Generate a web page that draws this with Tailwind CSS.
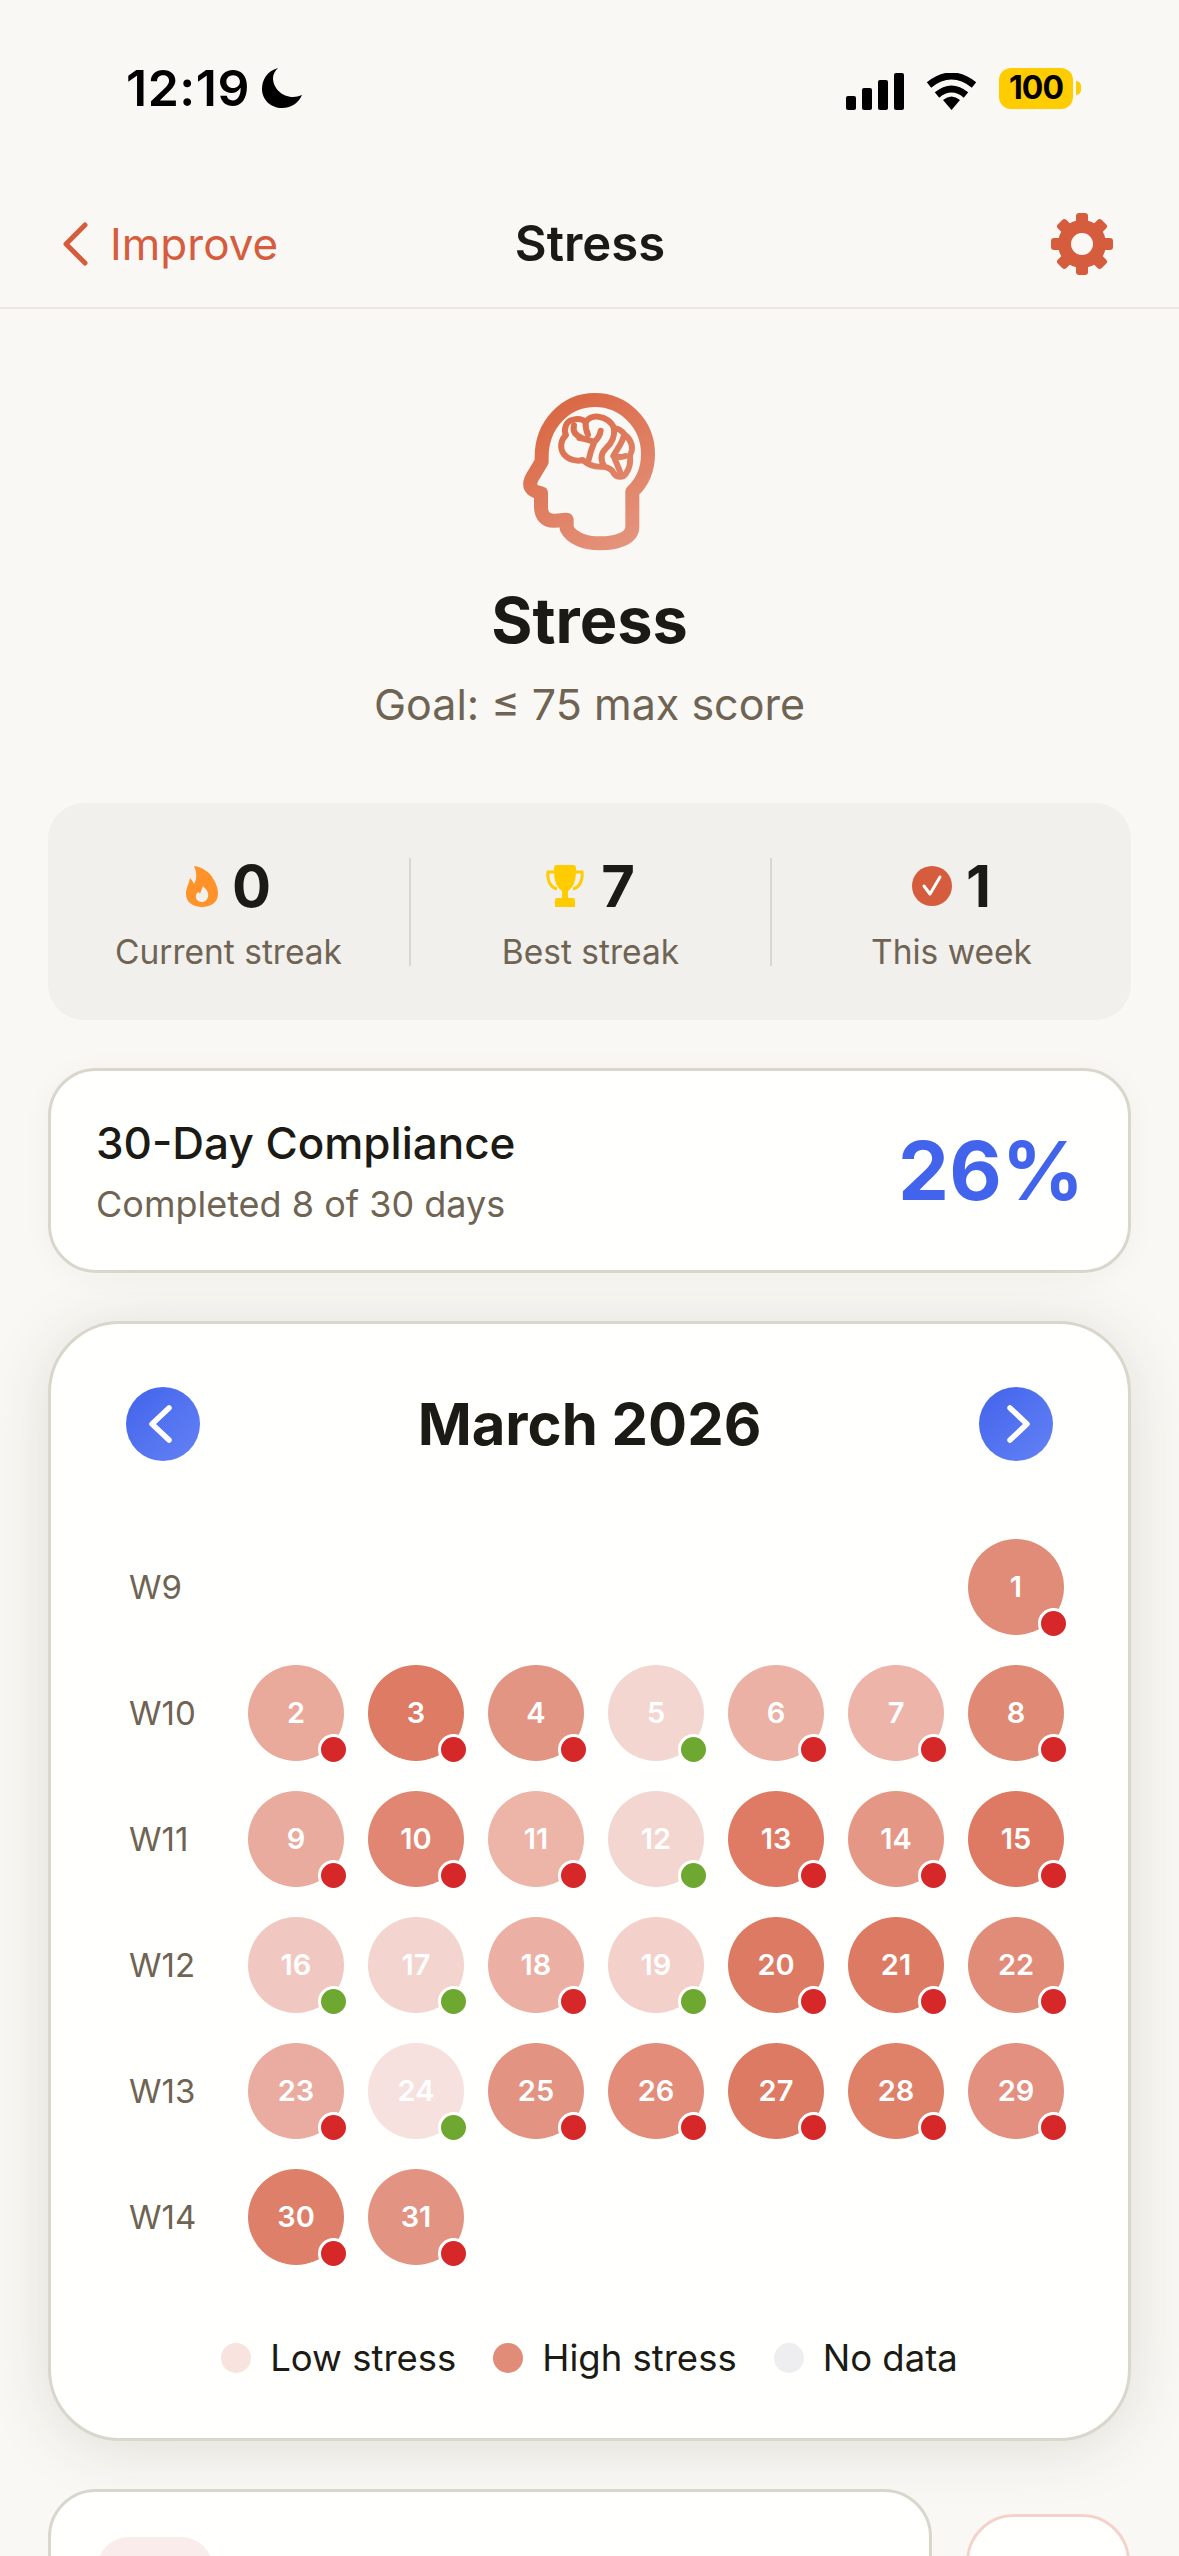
<!DOCTYPE html>
<html lang="en">
<head>
    <meta charset="UTF-8">
    <meta name="viewport" content="width=device-width, initial-scale=1.0">
    <title>Stress</title>
    <script src="https://cdn.jsdelivr.net/npm/@tailwindcss/browser@4"></script>
</head>
<body class="bg-[#f9f8f4]">
<div class="w-[1179px] h-[2556px] overflow-hidden font-['Inter',sans-serif] text-[#1c1a14]">

    <!-- status bar -->
    <div class="h-[180px] pt-[66px] pl-[126px] pr-[98px] flex justify-between items-start text-black">
        <div class="flex items-center gap-[12px] h-[44px]">
            <span class="text-[50px] leading-[44px] font-semibold tracking-[0.5px]">12:19</span>
            <svg width="40" height="40" viewBox="0 0 40 40" fill="#000"><path d="M16 0C5 3 0 12 0 21C0 32 9 40 20 40C30 40 37 34 40 27C37 28 34 29 31 29C20 29 11 20 11 10C11 6 13 3 16 0Z"/></svg>
        </div>
        <div class="flex items-center gap-[22px] h-[44px]">
            <div class="flex items-end gap-[6px] h-[37px] mt-[6px]">
                <div class="w-[10px] h-[14px] rounded-[2px] bg-black"></div>
                <div class="w-[10px] h-[22px] rounded-[2px] bg-black"></div>
                <div class="w-[10px] h-[30px] rounded-[2px] bg-black"></div>
                <div class="w-[10px] h-[37px] rounded-[2px] bg-black"></div>
            </div>
            <svg width="51" height="37" viewBox="0 0 51 37" class="mt-[6px]" fill="none" stroke="#000" stroke-width="7">
                <path d="M3 12Q25.500 -6 48 12"/>
                <path d="M11 22Q25.500 10 40 22"/>
                <path d="M25.500 37L17 27Q25.500 20 34 27Z" fill="#000" stroke="none"/>
            </svg>
            <div class="flex items-center gap-[3px]">
                <div class="w-[74px] h-[41px] rounded-[12px] bg-[#ffcc00] flex items-center justify-center text-[32px] font-bold tracking-[-1px]">100</div>
                <div class="w-[5px] h-[14px] rounded-r-full bg-[#ffcc00]"></div>
            </div>
        </div>
    </div>

    <!-- nav -->
    <div class="h-[129px] pl-[62px] pr-[66px] grid grid-cols-[1fr_auto_1fr] items-center border-b-[2px] border-[#e8e6dd]">
        <div class="flex items-center gap-[22px] text-[#d65c3e]">
            <svg width="26" height="44" viewBox="0 0 26 44" fill="none" stroke="#d65c3e" stroke-width="5" stroke-linecap="round" stroke-linejoin="round"><path d="M23 3L4 22L23 41"/></svg>
            <span class="text-[44px] leading-[56px]">Improve</span>
        </div>
        <div class="ml-[5px] text-[49px] leading-[56px] font-semibold">Stress</div>
        <div class="flex justify-end">
            <svg width="62" height="62" viewBox="0 0 62 62" fill="none">
                <circle cx="31" cy="31" r="17.500" stroke="#d65c3e" stroke-width="13"/>
                <g fill="#d65c3e">
                    <rect x="25" y="0" width="12" height="15" rx="3"/>
                    <rect x="25" y="0" width="12" height="15" rx="3" transform="rotate(45 31 31)"/>
                    <rect x="25" y="0" width="12" height="15" rx="3" transform="rotate(90 31 31)"/>
                    <rect x="25" y="0" width="12" height="15" rx="3" transform="rotate(135 31 31)"/>
                    <rect x="25" y="0" width="12" height="15" rx="3" transform="rotate(180 31 31)"/>
                    <rect x="25" y="0" width="12" height="15" rx="3" transform="rotate(225 31 31)"/>
                    <rect x="25" y="0" width="12" height="15" rx="3" transform="rotate(270 31 31)"/>
                    <rect x="25" y="0" width="12" height="15" rx="3" transform="rotate(315 31 31)"/>
                </g>
            </svg>
        </div>
    </div>

    <!-- hero -->
    <div class="flex flex-col items-center">
        <svg width="300" height="220" viewBox="0 0 900 660" fill="none" class="mt-[51px]">
            <defs>
                <linearGradient id="headGrad" gradientUnits="userSpaceOnUse" x1="300" y1="120" x2="600" y2="560">
                    <stop offset="0" stop-color="#d9643f"/>
                    <stop offset="1" stop-color="#e59680"/>
                </linearGradient>
            </defs>
            <g stroke="url(#headGrad)" stroke-linecap="round" stroke-linejoin="round">
                <path stroke-width="42" d="M577 395C606 368 624 330 624 282C624 190 550 120 465 120C375 120 305 195 305 290L305 305L278 350C262 378 272 392 303 400L303 440C303 470 320 484 345 482L380 479L380 505C395 535 435 550 480 550C530 550 577 535 577 500Z"/>
                <path stroke-width="18" d="M398 180C378 182 370 210 378 225C362 240 358 265 372 283C385 300 410 305 428 300C445 315 470 322 490 320C505 322 515 325 520 338C528 352 548 356 558 340C570 325 572 305 570 285C582 265 575 240 555 225C545 212 532 205 522 205C515 185 495 172 475 170C458 168 445 175 437 186C425 176 410 176 398 180Z"/>
                <path stroke-width="18" d="M402 196C398 212 405 225 422 232"/>
                <path stroke-width="18" d="M437 186C436 200 438 212 444 224"/>
                <path stroke-width="18" d="M418 234C440 236 458 246 464 244C472 238 480 225 482 212"/>
                <path stroke-width="18" d="M464 244C456 262 450 280 446 300"/>
                <path stroke-width="18" d="M522 205C525 230 515 250 498 265C480 282 482 300 492 318"/>
                <path stroke-width="18" d="M550 232C545 252 530 270 520 288C532 292 545 292 556 288"/>
                <path stroke-width="18" d="M524 296C530 310 535 322 540 335"/>
            </g>
        </svg>
        <h1 class="mt-[2px] text-[63px] leading-[76px] font-bold">Stress</h1>
        <p class="mt-[18px] text-[43px] leading-[56px] text-[#6f6454]">Goal: ≤ 75 max score</p>
    </div>

    <div class="px-[48px] flex flex-col">
        <!-- streak stats -->
        <div class="mt-[71px] h-[217px] pt-[55px] rounded-[36px] bg-[#f1f0ec] grid grid-cols-3 items-start">
            <div class="h-[108px] flex flex-col items-center">
                <div class="flex items-center gap-[14px] h-[56px]">
                    <svg width="32" height="41" viewBox="0 0 32 41"><path fill="#ff9228" d="M8 0C16 1 24 6 28 14C31 19 32 24 32 28C32 36 25 41 16 41C7 41 0 36 0 28C0 22 3 18 4 12C6 14 7 16 8 18C11 13 11 7 8 0Z"/><path fill="#f1f0ec" d="M17 20C18 22 21 23 22 27C23 32 20 36 16 36C12 36 9 33 10 29C11 26 13 25 14 28C15 25 16 23 17 20Z"/></svg>
                    <span class="text-[58px] leading-[56px] font-bold">0</span>
                </div>
                <span class="mt-[24px] text-[33.500px] leading-[28px] text-[#6f6454]">Current streak</span>
            </div>
            <div class="h-[108px] flex flex-col items-center border-l-[2px] border-[#d8d6d0]">
                <div class="flex items-center gap-[17px] h-[56px]">
                    <svg width="38" height="42" viewBox="0 0 38 42"><path fill="none" stroke="#ffcc00" stroke-width="3" d="M9 7H2C1 15 4 22 11 24M29 7H36C37 15 34 22 27 24"/><path fill="#ffcc00" d="M8 3C8 1 9 0 11 0H27C29 0 30 1 30 3C30 14 29 21 22 26V33H27C29 33 29 35 29 37V42H9V37C9 35 9 33 11 33H16V26C9 21 8 14 8 3Z"/></svg>
                    <span class="text-[58px] leading-[56px] font-bold">7</span>
                </div>
                <span class="mt-[24px] text-[33.500px] leading-[28px] text-[#6f6454]">Best streak</span>
            </div>
            <div class="h-[108px] flex flex-col items-center border-l-[2px] border-[#d8d6d0]">
                <div class="flex items-center gap-[14px] h-[56px]">
                    <svg width="40" height="40" viewBox="0 0 40 40"><circle cx="20" cy="20" r="20" fill="#d65c3e"/><path d="M12 20L18 28L28 11" fill="none" stroke="#fff" stroke-width="3" stroke-linecap="round" stroke-linejoin="round"/></svg>
                    <span class="text-[58px] leading-[56px] font-bold">1</span>
                </div>
                <span class="mt-[24px] text-[33.500px] leading-[28px] text-[#6f6454]">This week</span>
            </div>
        </div>

        <!-- compliance -->
        <div class="mt-[48px] h-[205px] pl-[45px] pr-[44px] rounded-[48px] border-[3px] border-[#d9d6cc] bg-[#fffffd] shadow-[0_4px_30px_rgba(60,50,30,0.04)] flex items-center justify-between">
            <div class="flex flex-col">
                <span class="text-[44px] leading-[56px] font-medium">30-Day Compliance</span>
                <span class="mt-[11px] text-[36px] leading-[44px] text-[#6f6454]">Completed 8 of 30 days</span>
            </div>
            <span class="text-[81px] leading-[90px] font-bold text-[#4263eb]">26%</span>
        </div>

        <!-- calendar -->
        <div class="mt-[48px] h-[1120px] pt-[63px] px-[75px] rounded-[72px] border-[3px] border-[#d9d6cc] bg-[#fffffd] shadow-[0_6px_64px_rgba(60,50,30,0.13)] flex flex-col">
            <div class="flex items-center justify-between h-[74px]">
                <div class="w-[74px] h-[74px] rounded-full bg-gradient-to-br from-[#4263eb] to-[#6482f5] flex items-center justify-center">
                    <svg width="74" height="74" viewBox="0 0 74 74" fill="none" stroke="#fff" stroke-width="5.500" stroke-linecap="round" stroke-linejoin="round"><path d="M43 21L26 37L43 53"/></svg>
                </div>
                <h2 class="text-[58px] leading-[74px] font-bold">March 2026</h2>
                <div class="w-[74px] h-[74px] rounded-full bg-gradient-to-br from-[#4263eb] to-[#6482f5] flex items-center justify-center">
                    <svg width="74" height="74" viewBox="0 0 74 74" fill="none" stroke="#fff" stroke-width="5.500" stroke-linecap="round" stroke-linejoin="round"><path d="M31 21L48 37L31 53"/></svg>
                </div>
            </div>
            <div id="weeks" class="mt-[78px] -mr-[12px] flex flex-col gap-[30px]"></div>
            <div class="mt-[71px] -mx-[12px] flex items-center justify-center gap-[37px] text-[36.500px] leading-[44px]">
                <div class="flex items-center gap-[19px]"><span class="w-[30px] h-[30px] rounded-full bg-[#f8e3df]"></span>Low stress</div>
                <div class="flex items-center gap-[19px]"><span class="w-[30px] h-[30px] rounded-full bg-[#e18c78]"></span>High stress</div>
                <div class="flex items-center gap-[19px]"><span class="w-[30px] h-[30px] rounded-full bg-[#eeeef0]"></span>No data</div>
            </div>
        </div>

        <!-- next row, cut off by the screen -->
        <div class="mt-[48px] flex items-start gap-[34px]">
            <div class="w-[884px] h-[200px] pt-[45px] pl-[46px] rounded-[48px] border-[3px] border-[#d9d6cc] bg-[#fffffd] flex items-start gap-[62px] shrink-0">
                <div class="w-[116px] h-[116px] rounded-[32px] bg-[#f9ecea] shrink-0"></div>
                <span class="mt-[9px] text-[44px] leading-[56px] font-semibold">Scan baseline</span>
            </div>
            <div class="mt-[25px] w-[164px] h-[160px] rounded-[48px] border-[3px] border-[#f4d2ca] bg-[#fffffd]"></div>
        </div>
    </div>
</div>

<script>
    // [day, colour of the circle, good day?]
    const semanas = [
        ["W9", [null, null, null, null, null, null, [1, "#e08c78"]]],
        ["W10", [[2, "#e9a99b"], [3, "#dd7b64"], [4, "#e39583"], [5, "#f4d6d1", true], [6, "#ebb1a5"], [7, "#edb5a9"], [8, "#e08a76"]]],
        ["W11", [[9, "#e9ab9e"], [10, "#e08673"], [11, "#edb4a8"], [12, "#f4d6d1", true], [13, "#df7a64"], [14, "#e59786"], [15, "#de7a64"]]],
        ["W12", [[16, "#f1c8c1", true], [17, "#f3d4ce", true], [18, "#ebb0a3"], [19, "#f3d0ca", true], [20, "#dd7a63"], [21, "#dd7a63"], [22, "#e18c79"]]],
        ["W13", [[23, "#eaaca0"], [24, "#f6e1de", true], [25, "#e39382"], [26, "#e28c79"], [27, "#dd7a63"], [28, "#df8069"], [29, "#e39080"]]],
        ["W14", [[30, "#dd7f69"], [31, "#e39382"], null, null, null, null, null]],
    ];

    const contenedor = document.getElementById("weeks");
    semanas.forEach(([semana, dias]) => {
        let fila = `<div class="h-[96px] flex items-center">
            <span class="w-[122px] pl-[3px] text-[33px] leading-[40px] text-[#6f6454] shrink-0">${semana}</span>
            <div class="grid grid-cols-[repeat(7,96px)] gap-x-[24px]">`;
        dias.forEach(dia => {
            if (!dia) {
                fila += `<div class="h-[96px]"></div>`;
                return;
            }
            const punto = dia[2] ? "bg-[#6fa830]" : "bg-[#d62828]";
            fila += `<div class="relative h-[96px] rounded-full flex items-center justify-center text-white text-[29px] font-semibold" style="background:${dia[1]}">
                ${dia[0]}
                <span class="absolute -right-[5px] -bottom-[4px] w-[31px] h-[31px] rounded-full border-[3px] border-white ${punto}"></span>
            </div>`;
        });
        contenedor.innerHTML += fila + `</div></div>`;
    });
</script>
</body>
</html>
